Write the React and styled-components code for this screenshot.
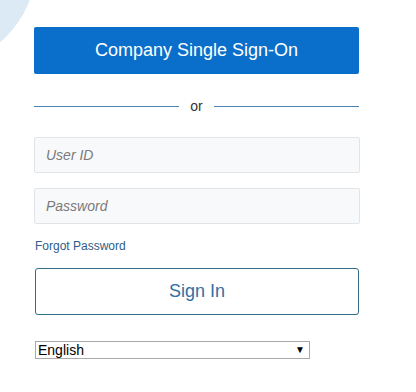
import React from "react";
import styled, { createGlobalStyle } from "styled-components";

const Global = createGlobalStyle`
  html, body { margin: 0; padding: 0; background: #ffffff; }
  body { font-family: "Liberation Sans", Arial, sans-serif; }
  * { box-sizing: border-box; }
`;

const Page = styled.div`
  position: relative;
  width: 416px;
  height: 392px;
  overflow: hidden;
  background: #fff;
`;

const Bubble = styled.div`
  position: absolute;
  left: -166px;
  top: -136px;
  width: 202px;
  height: 202px;
  border-radius: 50%;
  background: #dceaf6;
`;

const Form = styled.div`
  position: relative;
  width: 326px;
  margin-left: 34px;
  padding-top: 27px;
  display: flex;
  flex-direction: column;
`;

const SsoButton = styled.button`
  height: 47px;
  width: 325px;
  border: none;
  border-radius: 2px;
  background: #0a6fcb;
  color: #fff;
  font-family: "Liberation Sans", Arial, sans-serif;
  font-size: 18px;
  cursor: pointer;
`;

const Divider = styled.div`
  display: flex;
  align-items: center;
  gap: 11px;
  margin-top: 23px;
  height: 18px;
  width: 325px;
  color: #333;
  font-size: 14px;
`;

const Rule = styled.div`
  flex: 1;
  height: 1px;
  background: #4a82b4;
`;

const Field = styled.input`
  height: 36px;
  width: 326px;
  border: 1px solid #e2e5e8;
  border-radius: 2px;
  background: #f8f9fb;
  padding: 0 11px;
  font-family: "Liberation Sans", Arial, sans-serif;
  font-size: 14px;
  margin-top: ${(p) => p.$gap}px;
  outline: none;
  &::placeholder { color: #7a7a7a; font-style: italic; }
`;

const Forgot = styled.a`
  margin-top: 15px;
  font-size: 12px;
  color: #2d5d88;
  text-decoration: none;
  line-height: 14px;
  padding-left: 1px;
`;

const SignIn = styled.button`
  margin-top: 15px;
  margin-left: 1px;
  height: 47px;
  width: 324px;
  background: #fff;
  border: 1px solid #2f6f8a;
  border-radius: 3px;
  color: #2f6fa3;
  font-family: "Liberation Sans", Arial, sans-serif;
  font-size: 18px;
  cursor: pointer;
`;

const SelectWrap = styled.div`
  position: relative;
  margin-top: 26px;
  margin-left: 1px;
  width: 275px;
  height: 18px;
`;

const Select = styled.select`
  appearance: none;
  -webkit-appearance: none;
  width: 100%;
  height: 18px;
  border: 1px solid #a9a9a9;
  border-radius: 0;
  background: #fff;
  padding: 0 0 0 2px;
  font-family: "Liberation Sans", Arial, sans-serif;
  font-size: 14px;
  color: #000;
  line-height: 16px;
`;

const Arrow = styled.span`
  position: absolute;
  right: 5px;
  top: 3px;
  font-size: 10px;
  line-height: 12px;
  color: #000;
  pointer-events: none;
`;

export default function App() {
  return (
    <Page>
      <Global />
      <Bubble />
      <Form>
        <SsoButton>Company Single Sign-On</SsoButton>
        <Divider>
          <Rule />
          <span>or</span>
          <Rule />
        </Divider>
        <Field $gap={22} placeholder="User ID" />
        <Field $gap={15} type="password" placeholder="Password" />
        <Forgot href="#">Forgot Password</Forgot>
        <SignIn>Sign In</SignIn>
        <SelectWrap>
          <Select defaultValue="en">
            <option value="en">English</option>
          </Select>
          <Arrow>▼</Arrow>
        </SelectWrap>
      </Form>
    </Page>
  );
}
